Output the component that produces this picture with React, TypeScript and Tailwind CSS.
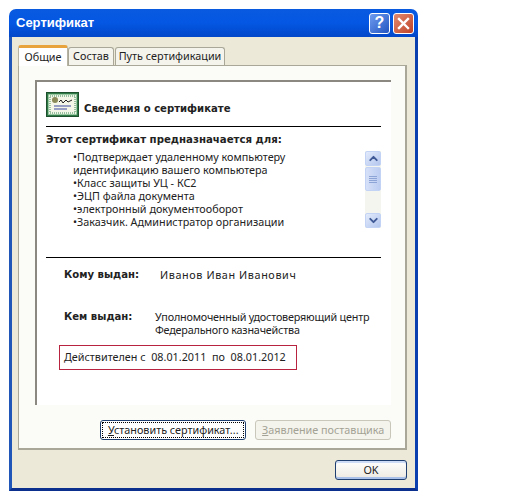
import { ChevronUp, ChevronDown } from 'lucide-react';

const lines = [
  '•Подтверждает удаленному компьютеру',
  'идентификацию вашего компьютера',
  '•Класс защиты УЦ - КС2',
  '•ЭЦП файла документа',
  '•электронный документооборот',
  '•Заказчик. Администратор организации',
];

const CertIcon = () => (
  <svg width="33" height="25" viewBox="0 0 33 25" className="shrink-0">
    <rect x="0.5" y="0.5" width="32" height="24" fill="#2f7a47" stroke="#1d4f2c" />
    <rect x="2.5" y="2.5" width="28" height="20" fill="#eef5e6" stroke="#9fd0a8" strokeDasharray="2 1" />
    <rect x="4" y="4" width="25" height="17" fill="#f4f6e8" stroke="#3d8a55" strokeDasharray="1 1" />
    <circle cx="9" cy="8" r="3" fill="#8a8a58" />
    <path d="M13 10 L15 8 L17 11 L20 8 L22 10 L26 8" fill="none" stroke="#222" strokeWidth="1" />
    <path d="M8 14 H25" stroke="#3a4aa0" strokeWidth="1" />
    <path d="M8 17 H21" stroke="#3a4aa0" strokeWidth="1" />
  </svg>
);

const ScrollBtn = ({ down }: { down?: boolean }) => (
  <div className="h-[15px] flex items-center justify-center rounded-[2px] border border-[#c3d3f5] bg-gradient-to-br from-[#e3ebfb] to-[#b4c6ee] text-[#3f5a96]">
    {down ? <ChevronDown size={13} strokeWidth={3.5} /> : <ChevronUp size={13} strokeWidth={3.5} />}
  </div>
);

export default function App() {
  return (
    <div className="w-[512px] h-[499px] bg-white pt-[9px] pl-[9px] overflow-hidden font-['Noto_Sans',sans-serif] text-[10.8px] text-[#222]">
      {/* Окно */}
      <div className="w-[409px] h-[482px] flex flex-col rounded-t-[7px] overflow-hidden">
        <div className="h-[28px] shrink-0 flex items-center pl-[7px] pr-[4px] bg-gradient-to-b from-[#0a5ae0] via-[#0457e3] to-[#0347c9]">
          <span className="font-['Liberation_Sans',sans-serif] font-bold text-[13px] text-white flex-1">Сертификат</span>
          <div className="flex gap-[3px] items-center">
            <div className="w-[21px] h-[21px] rounded-[3px] border border-white bg-gradient-to-br from-[#6f9cf0] to-[#2354c0] flex items-center justify-center text-white font-bold text-[16px] font-['Liberation_Sans',sans-serif]">?</div>
            <div className="w-[21px] h-[21px] rounded-[3px] border border-white bg-gradient-to-br from-[#e08a70] to-[#bf4126] flex items-center justify-center">
              <svg width="13" height="13" viewBox="0 0 13 13">
                <path d="M2 2 L11 11 M11 2 L2 11" stroke="#fff" strokeWidth="2.4" strokeLinecap="square" />
              </svg>
            </div>
          </div>
        </div>

        <div className="flex-1 flex flex-col bg-[#ece9d8] border-x-[3px] border-b-[3px] border-l-[#1f56b8] border-r-[#0a3fb0] border-b-[#0a2f8c] pl-[6px] pr-[8px]">
          {/* Вкладки */}
          <div className="h-[20px] mt-[8px] flex items-end shrink-0 relative z-10 whitespace-nowrap">
            <div className="w-[50px] h-[21px] -mb-[1px] bg-white border-x border-[#b8b4a4] border-t-[3px] border-t-[#e8a33c] rounded-t-[3px] flex items-center justify-center">Общие</div>
            <div className="w-[46px] h-[18px] bg-[#f4f3ec] border-x border-t border-[#a9a797] rounded-t-[3px] flex items-center justify-center">Состав</div>
            <div className="w-[110px] h-[18px] ml-[1px] bg-[#f4f3ec] border-x border-t border-[#a9a797] rounded-t-[3px] flex items-center justify-center">Путь сертификации</div>
          </div>

          {/* Панель вкладки */}
          <div className="w-[389px] h-[385px] flex flex-col bg-[#fbfbf8] border border-[#a9a797] border-b-2 border-r-2 pl-[16px] pt-[14px] pr-[14px]">
            <div className="w-[356px] h-[325px] bg-white border-t-2 border-l-2 border-[#8a8880] pl-[9px] pr-[10px] pt-[10px]">
              <div className="flex items-center gap-[5px] h-[25px]">
                <CertIcon />
                <span className="font-['DejaVu_Sans',sans-serif] text-[10.1px] font-bold mt-[9px]">Сведения о сертификате</span>
              </div>
              <div className="mt-[9px] border-t border-black" />
              <div className="mt-[6px] font-['DejaVu_Sans',sans-serif] text-[10.2px] font-bold leading-[13px]">Этот сертификат предназначается для:</div>

              <div className="flex mt-[5px]">
                <div className="flex-1 -mt-[1px] pl-[27px] leading-[13px] whitespace-nowrap">
                  {lines.map((l) => (
                    <div key={l}>{l}</div>
                  ))}
                </div>
                <div className="w-[16px] h-[77px] flex flex-col bg-[#f3f5ee]">
                  <ScrollBtn />
                  <div className="h-[24px] mt-[1px] rounded-[2px] border border-[#c3d3f5] bg-gradient-to-r from-[#d6e0f8] to-[#bccdf2] flex flex-col items-center justify-center gap-[1px]">
                    <div className="w-[8px] h-px bg-[#8da4d6]" />
                    <div className="w-[8px] h-px bg-[#8da4d6]" />
                    <div className="w-[8px] h-px bg-[#8da4d6]" />
                    <div className="w-[8px] h-px bg-[#8da4d6]" />
                  </div>
                  <div className="flex-1" />
                  <ScrollBtn down />
                </div>
              </div>

              <div className="mt-[29px] border-t border-black" />

              <div className="flex mt-[10px] leading-[13px] whitespace-nowrap">
                <div className="w-[114px] pl-[18px] font-['DejaVu_Sans',sans-serif] text-[10.1px] font-bold">Кому выдан:</div>
                <div className="tracking-[0.6px]">Иванов Иван Иванович</div>
              </div>
              <div className="flex mt-[29px] leading-[13px] whitespace-nowrap">
                <div className="w-[109px] pl-[18px] font-['DejaVu_Sans',sans-serif] text-[10.1px] font-bold">Кем выдан:</div>
                <div className="tracking-[-0.2px]">
                  Уполномоченный удостоверяющий центр
                  <br />
                  Федерального казначейства
                </div>
              </div>
              <div className="w-[238px] h-[25px] mt-[9px] ml-[13px] border border-[#b8233f] flex items-center pl-[4px] whitespace-pre">
                Действителен с  08.01.2011  по  08.01.2012
              </div>
            </div>

            <div className="flex mt-[15px] ml-[65px] gap-[9px] whitespace-nowrap">
              <div className="w-[147px] h-[20px] rounded-[3px] border border-[#1f3f70] bg-white p-[1px]">
                <div className="h-full border border-dotted border-black flex items-center justify-center">
                  <span><span className="underline">У</span>становить сертификат...</span>
                </div>
              </div>
              <div className="w-[136px] h-[20px] rounded-[3px] border border-[#c9c7ba] bg-[#f4f3ec] text-[#a3a294] flex items-center justify-center">
                <span><span className="underline">З</span>аявление поставщика</span>
              </div>
            </div>
          </div>

          <div className="flex justify-end mt-[10px]">
            <div className="w-[72px] h-[20px] rounded-[3px] border border-[#1f3f70] bg-gradient-to-b from-white to-[#ece9e0] shadow-[inset_0_-2px_0_#a9c0e8,inset_0_2px_0_#cfdcf5] flex items-center justify-center">OK</div>
          </div>
        </div>
      </div>
    </div>
  );
}
